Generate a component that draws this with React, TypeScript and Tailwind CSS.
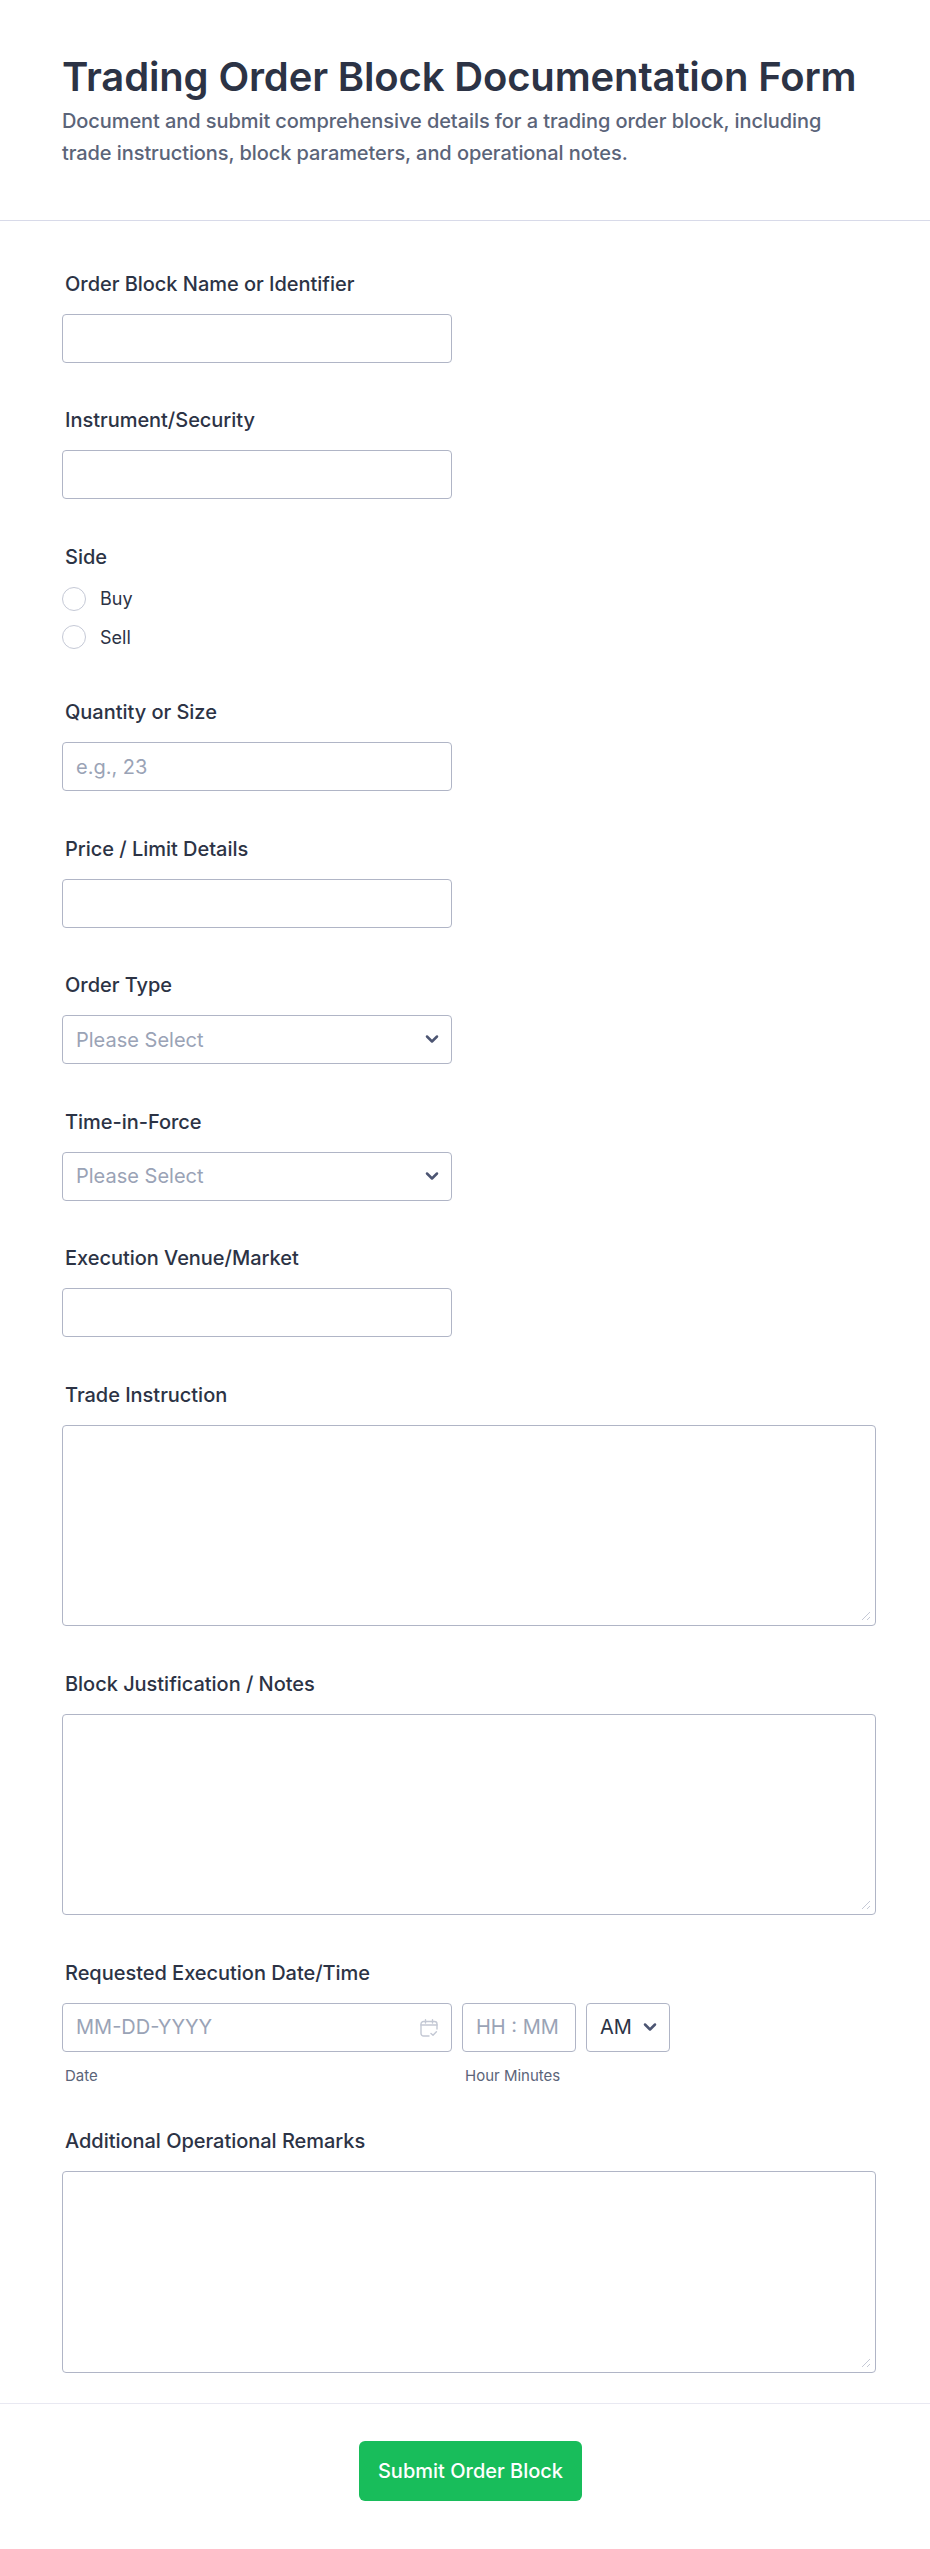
import { ChevronDown } from 'lucide-react';

const inputClass =
  'h-[49px] rounded-[4px] border border-[#b0b5c6] bg-white px-[13px] text-[20px] text-[#2c3345] placeholder:text-[#9aa3b6] outline-none';

function Label({ children }: { children: string }) {
  return <label className="mb-[18px] block pt-[2px] pl-[3px] text-[20px] leading-[23px] font-medium tracking-[-0.03px] text-[#2c3345]">{children}</label>;
}

function TextField({ label, placeholder }: { label: string; placeholder?: string }) {
  return (
    <div>
      <Label>{label}</Label>
      <input type="text" placeholder={placeholder} className={`${inputClass} block w-[390px]`} />
    </div>
  );
}

function Chevron() {
  return <ChevronDown className="absolute top-[14px] right-[10px] h-5 w-5 text-[#4c5572]" strokeWidth={3} />;
}

function SelectField({ label }: { label: string }) {
  return (
    <div>
      <Label>{label}</Label>
      <div className="relative w-[390px]">
        <select defaultValue="" className={`${inputClass} block w-full appearance-none text-[#9aa3b6]`}>
          <option value="">Please Select</option>
        </select>
        <Chevron />
      </div>
    </div>
  );
}

function TextAreaField({ label }: { label: string }) {
  return (
    <div>
      <Label>{label}</Label>
      <div className="relative w-[814px]">
        <textarea className="block h-[201.5px] w-full resize-none rounded-[4px] border border-[#b0b5c6] bg-white px-3 py-2 text-base outline-none" />
        <svg viewBox="0 0 10 10" fill="none" stroke="#c5c9d6" strokeWidth="1" className="absolute right-[5px] bottom-[5px] h-[10px] w-[10px]">
          <path d="M1 9l8-8M6 9l3-3" />
        </svg>
      </div>
    </div>
  );
}

function Radio({ label }: { label: string }) {
  return (
    <label className="flex h-6 items-center gap-[14px] text-[18px] text-[#2c3345]">
      <span className="h-6 w-6 rounded-full border border-[#c5c9d6] bg-white" />
      {label}
    </label>
  );
}

function CalendarIcon() {
  return (
    <svg viewBox="0 0 18 18" fill="none" stroke="#c3c8d4" strokeWidth="1.4" strokeLinecap="round" strokeLinejoin="round" className="absolute top-[16px] right-[14px] h-[18px] w-[18px]">
      <path d="M9 17H3.5A2.5 2.5 0 0 1 1 14.5V5a2.5 2.5 0 0 1 2.5-2.5h11A2.5 2.5 0 0 1 17 5v5" />
      <path d="M1 6h16M5.5 .7v3.4M12.5 .7v3.4" />
      <path d="M11 14.5l2 1.8 3.4-3.6" />
    </svg>
  );
}

export default function App() {
  return (
    <div className="h-[2549px] w-[930px] bg-white font-['Inter',sans-serif]">
      <header className="h-[221px] border-b border-[#d8dae9] px-[62px] pt-[52px]">
        <h1 className="text-[40px] leading-[50px] font-semibold tracking-[-0.15px] text-[#2c3345]">Trading Order Block Documentation Form</h1>
        <p className="mt-[3px] w-[800px] text-[20px] leading-8 font-medium tracking-[-0.08px] text-[#5b6479]">
          Document and submit comprehensive details for a trading order block, including trade instructions, block parameters, and operational notes.
        </p>
      </header>

      <form className="flex h-[2182px] flex-col">
        <div className="flex flex-col gap-[44.5px] px-[62px] pt-[49.5px]">
          <TextField label="Order Block Name or Identifier" />
          <TextField label="Instrument/Security" />
          <div>
            <Label>Side</Label>
            <div className="mb-[5.5px] flex flex-col gap-[14.5px]">
              <Radio label="Buy" />
              <Radio label="Sell" />
            </div>
          </div>
          <TextField label="Quantity or Size" placeholder="e.g., 23" />
          <TextField label="Price / Limit Details" />
          <SelectField label="Order Type" />
          <SelectField label="Time-in-Force" />
          <TextField label="Execution Venue/Market" />
          <TextAreaField label="Trade Instruction" />
          <TextAreaField label="Block Justification / Notes" />
          <div>
            <Label>Requested Execution Date/Time</Label>
            <div className="flex gap-[10px]">
              <div className="w-[390px]">
                <div className="relative">
                  <input type="text" placeholder="MM-DD-YYYY" className={`${inputClass} block w-full`} />
                  <CalendarIcon />
                </div>
                <span className="mt-[16px] block pl-[3px] text-[15px] leading-4 text-[#5b6479]">Date</span>
              </div>
              <div className="w-[114px]">
                <input type="text" placeholder="HH : MM" className={`${inputClass} block w-full`} />
                <span className="mt-[16px] block pl-[3px] text-[15px] leading-4 whitespace-nowrap text-[#5b6479]">Hour Minutes</span>
              </div>
              <div className="relative w-[84px]">
                <select className={`${inputClass} block w-full appearance-none text-[#0a1551]`}>
                  <option>AM</option>
                </select>
                <Chevron />
              </div>
            </div>
          </div>
          <TextAreaField label="Additional Operational Remarks" />
        </div>

        <footer className="mt-[30.5px] flex justify-center border-t border-[#e8e9f2] pt-[37px] pl-[11px]">
          <button type="button" className="h-[60px] w-[223px] rounded-[6px] bg-[#18bd5b] text-[20px] font-medium text-white">
            Submit Order Block
          </button>
        </footer>
      </form>
    </div>
  );
}
